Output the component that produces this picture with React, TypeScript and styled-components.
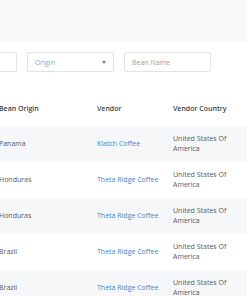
import React from "react";
import styled, { createGlobalStyle } from "styled-components";

const Global = createGlobalStyle`
  html, body { margin: 0; padding: 0; background: #ffffff; }
  body {
    font-family: "Open Sans", "Liberation Sans", sans-serif;
    overflow: hidden;
    -webkit-font-smoothing: antialiased;
  }
`;

const Page = styled.div`
  width: 247px;
  height: 296px;
  overflow: hidden;
  background: #ffffff;
`;

const TopBand = styled.div`
  height: 42px;
  background: #f9f9f9;
`;

const FilterBar = styled.div`
  display: flex;
  gap: 10px;
  padding-top: 10px;
  margin-left: -70px;
  height: 20px;
`;

const Field = styled.div`
  box-sizing: border-box;
  width: 87px;
  height: 20px;
  flex: none;
  border: 1px solid #e3e3e3;
  border-radius: 2px;
  display: flex;
  align-items: center;
  justify-content: space-between;
  padding: 0 7px 0 7px;
  font-size: 7px;
  color: #9e9e9e;
  background: #fff;
`;

const Caret = styled.span`
  width: 0;
  height: 0;
  border-left: 2.5px solid transparent;
  border-right: 2.5px solid transparent;
  border-top: 3px solid #777;
`;

const Table = styled.div`
  margin-top: 18px;
  margin-left: -1px;
`;

const Row = styled.div<{ $shaded?: boolean }>`
  display: grid;
  grid-template-columns: 98px 76px 1fr;
  height: 36px;
  align-items: center;
  background: ${(p) => (p.$shaded ? "#f6f7f9" : "#ffffff")};
`;

const HeadCell = styled.div`
  font-size: 7px;
  font-weight: 600;
  color: #3a3f4a;
  white-space: nowrap;
`;

const Cell = styled.div<{ $link?: boolean }>`
  font-size: 7px;
  line-height: 10px;
  color: ${(p) => (p.$link ? "#4a86c8" : "#555a63")};
  white-space: nowrap;
`;

const CountryCell = styled.div`
  font-size: 7px;
  line-height: 10px;
  color: #555a63;
  width: 54px;
`;

const rows = [
  { origin: "Panama", vendor: "Klatch Coffee" },
  { origin: "Honduras", vendor: "Theta Ridge Coffee" },
  { origin: "Honduras", vendor: "Theta Ridge Coffee" },
  { origin: "Brazil", vendor: "Theta Ridge Coffee" },
  { origin: "Brazil", vendor: "Theta Ridge Coffee" },
];

export default function App() {
  return (
    <Page>
      <Global />
      <TopBand />
      <FilterBar>
        <Field />
        <Field>
          Origin
          <Caret />
        </Field>
        <Field>Bean Name</Field>
      </FilterBar>
      <Table>
        <Row>
          <HeadCell>Bean Origin</HeadCell>
          <HeadCell>Vendor</HeadCell>
          <HeadCell>Vendor Country</HeadCell>
        </Row>
        {rows.map((r, i) => (
          <Row key={i} $shaded={i % 2 === 0}>
            <Cell>{r.origin}</Cell>
            <Cell $link>{r.vendor}</Cell>
            <CountryCell>United States Of America</CountryCell>
          </Row>
        ))}
      </Table>
    </Page>
  );
}
